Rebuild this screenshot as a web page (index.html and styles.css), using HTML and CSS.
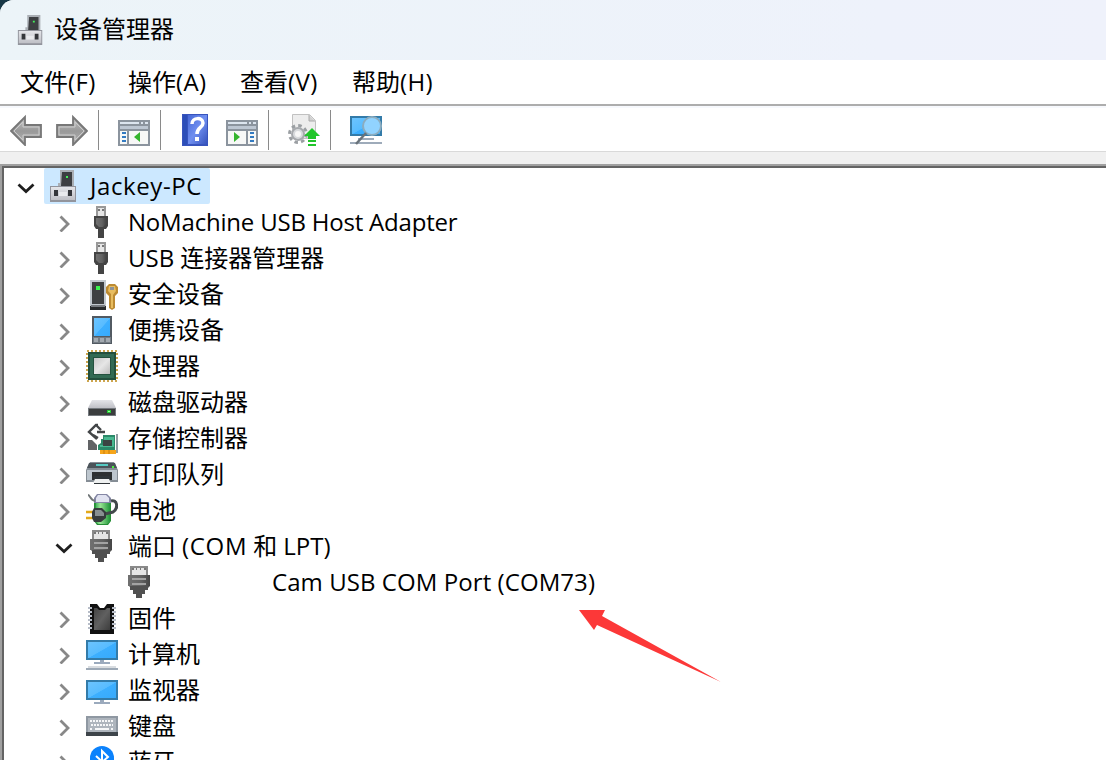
FILE: index.html
```html
<!DOCTYPE html>
<html lang="zh-CN">
<head>
<meta charset="utf-8">
<title>设备管理器</title>
<link rel="stylesheet" href="styles.css">
</head>
<body>
<svg class="defs" width="0" height="0">
  <defs>
    <linearGradient id="blue" x1="0" y1="0" x2="1" y2="1"><stop offset="0" stop-color="#6cc4ff"/><stop offset=".5" stop-color="#58bcff"/><stop offset=".52" stop-color="#3dafff"/><stop offset="1" stop-color="#36aafc"/></linearGradient>
    <linearGradient id="silver" x1="0" y1="0" x2="0" y2="1"><stop offset="0" stop-color="#e4e5e9"/><stop offset="1" stop-color="#bfc0c6"/></linearGradient>
    <linearGradient id="plug" x1="0" y1="0" x2="1" y2="0"><stop offset="0" stop-color="#707070"/><stop offset=".6" stop-color="#626262"/><stop offset="1" stop-color="#444"/></linearGradient>
    <linearGradient id="arrow" x1="0" y1="0" x2="0" y2="1"><stop offset="0" stop-color="#c5c5c5"/><stop offset=".5" stop-color="#999"/><stop offset="1" stop-color="#b4b4b4"/></linearGradient>
    <linearGradient id="book" x1="0" y1="0" x2="1" y2="1"><stop offset="0" stop-color="#4668d5"/><stop offset=".5" stop-color="#708ff0"/><stop offset="1" stop-color="#3653bd"/></linearGradient>
    <linearGradient id="chip" x1="0" y1="0" x2="1" y2="1"><stop offset="0" stop-color="#c8c8c8"/><stop offset=".5" stop-color="#e6e6e6"/><stop offset="1" stop-color="#bbb"/></linearGradient>
    <linearGradient id="green" x1="0" y1="0" x2="1" y2="0"><stop offset="0" stop-color="#35a853"/><stop offset=".35" stop-color="#98e594"/><stop offset="1" stop-color="#23963c"/></linearGradient>
    <linearGradient id="die" x1="0" y1="0" x2="1" y2="1"><stop offset="0" stop-color="#444"/><stop offset=".5" stop-color="#606060"/><stop offset="1" stop-color="#3c3c3c"/></linearGradient>
    <symbol id="pc" viewBox="0 0 32 32">
      <path d="M12 0h14v17H10v-4h2z" fill="#aaafb5"/><path d="M14 2h10v14H13z" fill="#3d3f42"/><path d="M18 6h2v2h-2z" fill="#43f15a"/>
      <path d="M2 16h26v16H2z" fill="#92949c"/><path d="M3 17h24v13H3z" fill="url(#silver)"/><path d="M11 22h8v4h-8z" fill="#e9eaed"/>
      <path d="M6 20h4v6H6zM20 20h4v6h-4z" fill="#34363a"/>
    </symbol>
    <symbol id="usb" viewBox="0 0 32 32">
      <path d="M10 0h10v11H10z" fill="#999"/><path d="M12 2h6v8h-6z" fill="#e6e6e6"/><path d="M12 3h2v2h-2zM16 3h2v2h-2z" fill="#777"/>
      <path d="M8 10h14v10l-2 3h-2v9h-6v-9h-2l-2-3z" fill="#444"/><path d="M10 12h10v6l-3 3h-4l-3-3z" fill="url(#plug)"/>
    </symbol>
    <symbol id="security" viewBox="0 0 32 32">
      <path d="M4 2h16v26H4z" fill="#c2c8ce"/><path d="M6 4h12v22H6z" fill="#3e4042"/><path d="M4 28h16v4H4z" fill="#292b2d"/><path d="M5 27h14v2H5z" fill="#777b80"/><path d="M10 8h4v4h-4z" fill="#39f34d"/>
      <path d="M23 6h6l3 3v6l-3 3v12l-3 2-3-2V18l-3-3V9z" fill="#bd8b33"/><path d="M23 8h6l1 5-3 4v13h-2V16l-3-3z" fill="#e8bd60"/><path d="M24 9h4v3h-4z" fill="#8c9299"/>
    </symbol>
    <symbol id="portable" viewBox="0 0 32 32">
      <path d="M6 2h20v28H6z" fill="#525a62"/><path d="M8 4h16v18H8z" fill="url(#blue)"/><path d="M7 23h18v6H7z" fill="#747c84"/><path d="M8 24h4v4H8zM14 24h4v4h-4zM20 24h4v4h-4z" fill="#a2a9b0"/>
    </symbol>
    <symbol id="cpu" viewBox="0 0 32 32">
      <path d="M1 1h30v30H1z" fill="none" stroke="#cda64f" stroke-width="2" stroke-dasharray="2 2"/><path d="M2 2h28v28H2z" fill="#234f3d"/><path d="M4 4h24v24H4z" fill="#326a53"/><path d="M7 7h18v18H7z" fill="#24513e"/><path d="M8 8h16v16H8z" fill="url(#chip)"/>
    </symbol>
    <symbol id="disk" viewBox="0 0 32 32">
      <path d="M6 14h20l4 8H2z" fill="url(#silver)"/><path d="M2 22h28v8H2z" fill="#74797e"/><path d="M3 23h26v6H3z" fill="#3b3d3e"/><path d="M21 24h4v3h-4z" fill="#24c835"/><path d="M22 25h2v1h-2z" fill="#9cff99"/>
    </symbol>
    <symbol id="storage" viewBox="0 0 32 32">
      <path d="M2 18h4l5 5v5H2z" fill="#616365"/><path d="M12 3h-2L3 10l8 7M10 3l5 5M7 13l5 3M11 10h8" fill="none" stroke="#434648" stroke-width="2.4"/>
      <path d="M17 13h12v15H12v-5l3-2v-4h2z" fill="#2b8969"/><path d="M18 15h10v10H14v-2h4z" fill="#49b891"/><path d="M17 18h9v6h-9z" fill="#3b4443"/><path d="M30 12h2v19h-2z" fill="#929da2"/><path d="M14 28h16v4H14z" fill="#f6a51b"/><path d="M18 28v4M23 28v4" stroke="#c97d0b"/>
    </symbol>
    <symbol id="printer" viewBox="0 0 32 32">
      <path d="M4 4h24l4 8v12H0V12z" fill="#858d95"/><path d="M3 5h26l2 5H1z" fill="#4b5359"/><path d="M10 6h12v2H10z" fill="#55c9c2"/><path d="M26 8h2v2h-2z" fill="#4cf33d"/><path d="M1 12h30v10H1z" fill="#bdc6ce"/><path d="M6 14h20v8H6z" fill="#2e3133"/><path d="M8 18h16v8H8z" fill="#30363a"/><path d="M9 21h14l2 4H7z" fill="#eff1f1"/>
    </symbol>
    <symbol id="battery" viewBox="0 0 32 32">
      <path d="M11 1h10l4 4v22l-3 4H11l-3-4V5z" fill="#258e35"/><path d="M10 6h14v22l-3 2h-9l-3-3z" fill="url(#green)"/><path d="M11 0h10l4 4v5H8V4z" fill="#8587a5"/><path d="M12 1h8l3 3v4H10V4z" fill="#e0e2f0"/>
      <path d="M2 1c2 0 2 5 7 6" fill="none" stroke="#727779" stroke-width="2"/><path d="M25 7c6-2 8 7 2 11l-8 2" fill="none" stroke="#42484b" stroke-width="3"/><path d="M0 18h8M0 24h8" stroke="#e3a91b" stroke-width="2.5"/><path d="M8 14h8l4 4v6l-5 4H8l-2-4v-6z" fill="#373b3d"/><path d="M9 16h6l3 3v3H9z" fill="#888f91"/>
    </symbol>
    <symbol id="port" viewBox="0 0 32 32">
      <path d="M6 0h18v10H6z" fill="#8a8a8a"/><path d="M8 2h14v8H8z" fill="#e5e5e5"/><path d="M8 2h2v2H8zM12 2h1v2h-1zM16 2h1v2h-1zM20 2h2v2h-2z" fill="#777"/>
      <path d="M4 9h22v11l-2 2v2h-3v4h-3v4h-6v-4H9v-4H6v-3l-2-2z" fill="#505050"/><path d="M4 9h22v11H4z" fill="url(#plug)"/><path d="M8 12h14v2H8zM8 17h14v2H8z" fill="#a3a3a3"/>
    </symbol>
    <symbol id="firmware" viewBox="0 0 32 32">
      <path d="M4 2h7l3 4h4l3-4h7v30H4z" fill="#111"/><path d="M8 6h3l2 2h6l2-2h3v22H8z" fill="url(#die)"/><path d="M4 5v24M28 5v24" stroke="#b7bdc8" stroke-width="4" stroke-dasharray="2 2"/>
    </symbol>
    <symbol id="computer" viewBox="0 0 32 32">
      <path d="M0 2h32v20H0z" fill="#337ba9"/><path d="M2 4h28v16H2z" fill="url(#blue)"/><path d="M14 22h4v2h6v2H8v-2h6z" fill="#9baabd"/><path d="M0 30h32v2H0z" fill="#9da9b6"/><path d="M2 28h28v2H2z" fill="#d8dce0"/>
    </symbol>
    <symbol id="monitor" viewBox="0 0 32 32">
      <path d="M0 6h32v20H0z" fill="#337ba9"/><path d="M2 8h28v16H2z" fill="url(#blue)"/><path d="M14 26h4v2h6v2H8v-2h6z" fill="#9baabd"/>
    </symbol>
    <symbol id="keyboard" viewBox="0 0 32 32">
      <path d="M0 6h32v18H0z" fill="#8f98a2"/><path d="M2 8h28v14H2z" fill="#aeb5bd"/><path d="M4 11h24M5 15h22M4 19h3M25 19h3" stroke="#f6f7f8" stroke-width="2" stroke-dasharray="2 1"/><path d="M9 19h14" stroke="#f6f7f8" stroke-width="2"/><path d="M0 22h32v4H0z" fill="#3d444a"/>
    </symbol>
    <symbol id="bluetooth" viewBox="0 0 32 32">
      <rect x="4" y="0" width="24" height="32" rx="12" fill="#0b82fc"/><path d="M10 10l12 11-6 6V5l6 6-12 10" fill="none" stroke="#fff" stroke-width="2"/>
    </symbol>
    <symbol id="right" viewBox="0 0 20 20"><path d="M6.500 4.500l7.500 7.500-7.500 7.500" fill="none" stroke="#888" stroke-width="2.8"/></symbol>
    <symbol id="down" viewBox="0 0 20 20"><path d="M2.5 8.5l7.500 7 7.500-7" fill="none" stroke="#1f1f1f" stroke-width="2.8"/></symbol>
  </defs>
</svg>
<main class="window">
  <header class="titlebar"><svg class="icon"><use href="#pc"/></svg><span>设备管理器</span></header>
  <nav class="menu">
    <span>文件<b class="lat">(F)</b></span><span>操作<b class="lat">(A)</b></span><span>查看<b class="lat">(V)</b></span><span>帮助<b class="lat">(H)</b></span>
  </nav>
  <div class="toolbar">
    <div class="group nav">
      <svg class="icon" viewBox="0 -1 32 32"><path d="M1 16L15 2v8h16v12H15v8z" fill="url(#arrow)" stroke="#777" stroke-width="1.8"/><path d="M4 16l9-9v5h16v8H13v5z" fill="none" stroke="#ccc"/></svg>
      <svg class="icon" viewBox="0 -1 32 32"><path d="M31 16L17 2v8H1v12h16v8z" fill="url(#arrow)" stroke="#777" stroke-width="1.8"/><path d="M28 16l-9-9v5H3v8h16v5z" fill="none" stroke="#ccc"/></svg>
    </div>
    <div class="group view">
      <svg class="icon" viewBox="0 0 32 32"><path d="M0 6h32v26H0z" fill="#8b949e"/><path d="M2 8h19v2H2zM23 8h2v2h-2zM27 8h3v2h-3z" fill="#dce5ef"/><path d="M2 12h28v3H2z" fill="#bdc7d3"/><path d="M2 17h7v13H2zM11 17h19v13H11z" fill="#f7f8f7"/><path d="M4 19h4M4 23h4M4 27h4" stroke="#337bc2" stroke-width="2"/><path d="M22 18v10l-6-5z" fill="#35b52e"/></svg>
    </div>
    <div class="group help">
      <svg class="icon" viewBox="0 0 32 32"><path d="M2 0h26v32H2z" fill="#3854bd"/><path d="M8 1h19v29H8z" fill="url(#book)"/><path d="M3 1h4v30H3z" fill="#2c4eb8"/><path d="M12 10c0-7 11-7 11-1 0 5-6 4-6 11" fill="none" stroke="#fff" stroke-width="3.500"/><path d="M15 23h4v4h-4z" fill="#fff"/></svg>
      <svg class="icon" viewBox="0 0 32 32"><path d="M0 6h32v26H0z" fill="#8b949e"/><path d="M2 8h19v2H2zM23 8h2v2h-2zM27 8h3v2h-3z" fill="#dce5ef"/><path d="M2 12h28v3H2z" fill="#bdc7d3"/><path d="M2 17h18v13H2zM22 17h8v13h-8z" fill="#f7f8f7"/><path d="M24 19h4M24 23h4M24 27h4" stroke="#337bc2" stroke-width="2"/><path d="M8 18v10l6-5z" fill="#35b52e"/></svg>
    </div>
    <div class="group update">
      <svg class="icon" viewBox="0 0 32 32"><path d="M4.500.5h17l6 6v18h-23z" fill="#ededed" stroke="#c1c1c1"/><path d="M21 1v6h6" fill="#d1d1d1" stroke="#aaa"/><circle cx="10" cy="20" r="8.500" fill="none" stroke="#9b9fa3" stroke-width="3" stroke-dasharray="3.500 3.170"/><circle cx="10" cy="20" r="6" fill="#d8dadd" stroke="#a6a9ad" stroke-width="2"/><circle cx="10" cy="20" r="3" fill="#f7f7f7"/><path d="M24 14l8 8h-4v3h-8v-3h-4zM20 26h8v2h-8zM20 30h8v2h-8z" fill="#21c52b"/></svg>
    </div>
    <div class="group scan">
      <svg class="icon" viewBox="0 0 32 32"><path d="M0 2h32v20H0z" fill="#337ba9"/><path d="M2 4h28v16H2z" fill="url(#blue)"/><path d="M8 24h16v2H8zM0 28h32v2H0z" fill="#9eabba"/><circle cx="22" cy="12" r="9" fill="#91d3ff" stroke="#8bacbf" stroke-width="2"/><path d="M16 19L6 30" stroke="#69737b" stroke-width="2.500"/></svg>
    </div>
  </div>
  <div class="band"></div>
  <section class="tree">
    <div class="row root"><svg class="chev"><use href="#down"/></svg><div class="selected"><svg class="icon"><use href="#pc"/></svg><span class="lat jackey">Jackey-PC</span></div></div>
    <div class="row"><svg class="chev"><use href="#right"/></svg><svg class="icon"><use href="#usb"/></svg><span class="lat nomachine">NoMachine USB Host Adapter</span></div>
    <div class="row"><svg class="chev"><use href="#right"/></svg><svg class="icon"><use href="#usb"/></svg><span class="lat usbtext">USB</span><span class="after">连接器管理器</span></div>
    <div class="row"><svg class="chev"><use href="#right"/></svg><svg class="icon"><use href="#security"/></svg><span>安全设备</span></div>
    <div class="row"><svg class="chev"><use href="#right"/></svg><svg class="icon"><use href="#portable"/></svg><span>便携设备</span></div>
    <div class="row"><svg class="chev"><use href="#right"/></svg><svg class="icon"><use href="#cpu"/></svg><span>处理器</span></div>
    <div class="row"><svg class="chev"><use href="#right"/></svg><svg class="icon"><use href="#disk"/></svg><span>磁盘驱动器</span></div>
    <div class="row"><svg class="chev"><use href="#right"/></svg><svg class="icon"><use href="#storage"/></svg><span>存储控制器</span></div>
    <div class="row"><svg class="chev"><use href="#right"/></svg><svg class="icon"><use href="#printer"/></svg><span>打印队列</span></div>
    <div class="row"><svg class="chev"><use href="#right"/></svg><svg class="icon"><use href="#battery"/></svg><span>电池</span></div>
    <div class="row"><svg class="chev"><use href="#down"/></svg><svg class="icon"><use href="#port"/></svg><span>端口</span><span class="lat com">(COM</span><span class="after">和</span><span class="lat lpt">LPT)</span></div>
    <div class="row child"><svg class="icon"><use href="#port"/></svg><span class="lat cam">Cam USB COM Port (COM73)</span></div>
    <div class="row"><svg class="chev"><use href="#right"/></svg><svg class="icon"><use href="#firmware"/></svg><span>固件</span></div>
    <div class="row"><svg class="chev"><use href="#right"/></svg><svg class="icon"><use href="#computer"/></svg><span>计算机</span></div>
    <div class="row"><svg class="chev"><use href="#right"/></svg><svg class="icon"><use href="#monitor"/></svg><span>监视器</span></div>
    <div class="row"><svg class="chev"><use href="#right"/></svg><svg class="icon"><use href="#keyboard"/></svg><span>键盘</span></div>
    <div class="row"><svg class="chev"><use href="#right"/></svg><svg class="icon"><use href="#bluetooth"/></svg><span>蓝牙</span></div>
  </section>
  <svg class="pointer" viewBox="0 0 142 72"><path d="M0 0h26l-3 6L142 72 18 15l-3 5z" fill="#fc3838"/></svg>
</main>
</body>
</html>
```
FILE: styles.css
```css
* { box-sizing: border-box; }
body { margin: 0; background: #173746; color: #000; font: 24px/36px "Open Sans", "Noto Sans CJK SC", sans-serif; }
.defs { position: absolute; }
.window { position: relative; height: 760px; overflow: hidden; display: flex; flex-direction: column; border-top-left-radius: 14px; background: #fff; white-space: nowrap; }
.icon { width: 32px; height: 32px; flex: none; display: block; }
.lat { font-family: "Open Sans", sans-serif; font-weight: 400; letter-spacing: -.4px; }
.titlebar { flex: none; height: 60px; display: flex; align-items: center; padding: 0 0 2px 16px; gap: 8px; background: linear-gradient(90deg, #ecf4f8, #eef2fb 80%, #eff2fb); }
.titlebar .icon { width: 30px; margin-top: 2px; }
.menu { flex: none; height: 46px; padding: 4px 0 0 20px; display: grid; grid-template-columns: 108px 112px 112px 112px; border-bottom: 2px solid #adadad; }
.menu .lat { letter-spacing: .4px; }
.toolbar { flex: none; height: 46px; display: flex; padding-top: 2px; border-top: 2px solid #f7f9fd; border-bottom: 1px solid #d9d9d9; }
.group { height: 40px; display: flex; align-items: center; gap: 14px; border-right: 1px solid #8a8a8a; }
.nav { width: 99px; padding-left: 10px; }
.view { width: 62px; padding-left: 19px; }
.help { width: 108px; padding-left: 19px; }
.update { width: 62px; padding-left: 19px; }
.scan { padding-left: 19px; border: 0; }
.band { flex: none; height: 12px; background: #f0f0f0; }
.tree { flex: 1; min-height: 0; border-top: 2px solid #a0a0a0; border-left: 2px solid #a0a0a0; box-shadow: inset 2px 2px #646464; padding: 2px 0 0 2px; }
.row { height: 36px; display: flex; align-items: center; padding-left: 50px; }
.chev { width: 20px; height: 20px; margin-right: 12px; flex: none; }
.row > .icon { margin-right: 10px; }
.root { padding-left: 12px; }
.root .chev { margin-right: 8px; }
.selected { width: 166px; height: 36px; padding-left: 4px; display: flex; align-items: center; gap: 10px; background: #cce8ff; border-radius: 2px; }
.child { padding-left: 120px; }
.child .lat { margin-left: 106px; }
.after { margin-left: 6px; }
.jackey { letter-spacing: .6px; }
.nomachine { letter-spacing: -.2px; }
.usbtext { letter-spacing: 0; }
.com { margin-left: 6px; letter-spacing: .7px; }
.lpt { margin-left: 6px; letter-spacing: 0; }
.cam { letter-spacing: .07px; }
.pointer { position: absolute; left: 579px; top: 610px; width: 142px; height: 72px; }
```
